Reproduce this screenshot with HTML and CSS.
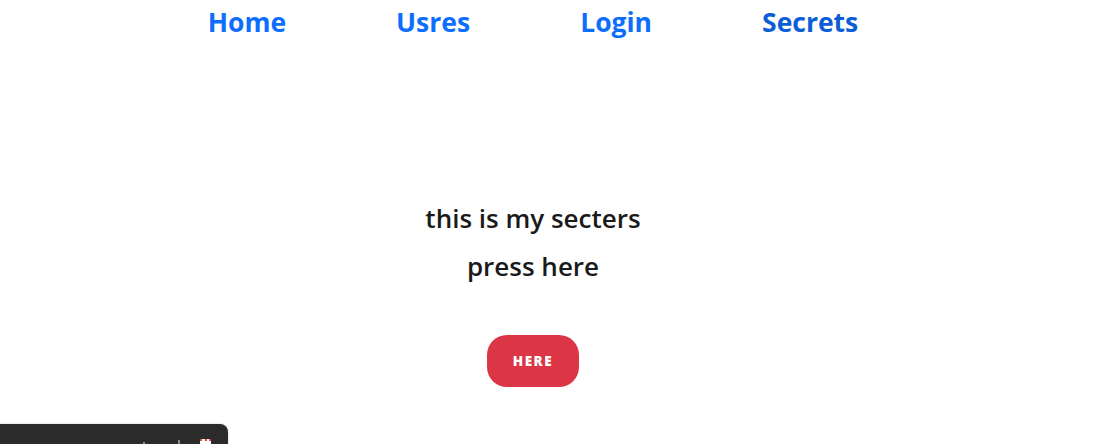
FILE: index.html
```html
<!DOCTYPE html>
<html lang="en">
<head>
<meta charset="utf-8">
<title>Secrets</title>
<link rel="stylesheet" href="styles.css">
</head>
<body>
<div class="page">
  <nav class="nav">
    <a class="nav-link" href="#">Home</a>
    <a class="nav-link" href="#">Usres</a>
    <a class="nav-link" href="#">Login</a>
    <a class="nav-link active" href="#">Secrets</a>
  </nav>
  <main class="main">
    <p class="line">this is my secters</p>
    <p class="line">press here</p>
    <button class="btn" type="button">HERE</button>
  </main>
</div>
<div class="toast">
  <span class="tick tick-a"></span>
  <span class="tick tick-b"></span>
  <span class="toast-icon"></span>
</div>
</body>
</html>
```
FILE: styles.css
```css
html, body {
  margin: 0;
  padding: 0;
  background: #fff;
}
body {
  font-family: "Open Sans", "Noto Sans", sans-serif;
  color: #212529;
  overflow: hidden;
  height: 444px;
}
.page {
  width: 1066px;
}
.nav {
  display: flex;
  justify-content: center;
  gap: 110px;
  padding-top: 4px;
}
.nav-link {
  font-size: 26.5px;
  font-weight: 700;
  color: #0d6efd;
  text-decoration: none;
  line-height: 36px;
}
.nav-link.active {
  color: #0b5ed7;
}
.main {
  display: flex;
  flex-direction: column;
  align-items: center;
  padding-top: 154px;
}
.line {
  margin: 0;
  font-size: 26px;
  font-weight: 600;
  line-height: 48px;
  color: #1a1a1a;
}
.btn {
  margin-top: 45px;
  width: 92px;
  height: 52px;
  border: none;
  border-radius: 20px;
  background: #dc3545;
  color: #fff;
  font-family: "Open Sans", sans-serif;
  font-weight: 800;
  font-size: 13.5px;
  letter-spacing: 1.5px;
}
.toast {
  position: fixed;
  left: 0;
  top: 424px;
  width: 228px;
  height: 30px;
  background: #2b2b2b;
  border-top-right-radius: 8px;
  display: flex;
  align-items: flex-start;
  padding-top: 15px;
  box-sizing: border-box;
  box-shadow: 0 0 2px rgba(0, 0, 0, 0.25);
}
.tick {
  width: 2px;
  height: 4px;
  margin-top: 3px;
  background: #8a8a8a;
}
.tick-a {
  margin-left: 143px;
}
.tick-b {
  margin-left: 33px;
  margin-top: 1px;
  height: 6px;
}
.toast-icon {
  width: 11px;
  height: 8px;
  margin-left: 20px;
  background: #fff;
  border-top: 2px dotted #e4432d;
  box-sizing: border-box;
}
```
